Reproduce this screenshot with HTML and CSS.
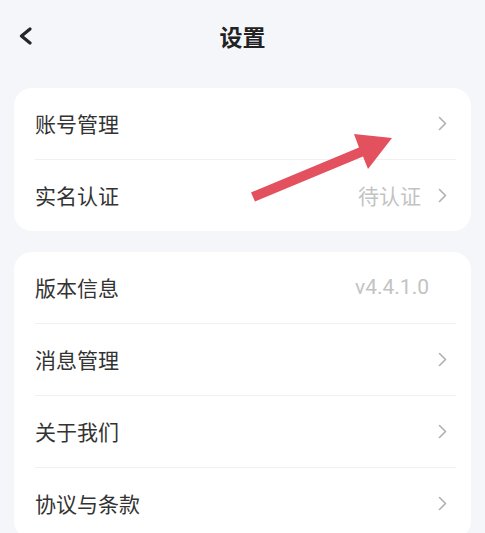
FILE: index.html
```html
<!DOCTYPE html>
<html lang="zh-CN">
<head>
<meta charset="utf-8">
<title>设置</title>
<link rel="stylesheet" href="styles.css">
</head>
<body>
<div class="page">
  <header class="header">
    <div class="back">
      <svg width="15" height="19" viewBox="0 0 15 19"><polyline points="12,2 3.5,9 12,16" fill="none" stroke="#262626" stroke-width="3.2" stroke-linecap="round" stroke-linejoin="round"/></svg>
    </div>
    <h1 class="title">设置</h1>
    <div></div>
  </header>

  <section class="card">
    <div class="row"><span class="label">账号管理</span><span class="spacer"></span><svg class="chev" width="9" height="15" viewBox="0 0 9 15"><polyline points="1.5,1.5 7.5,7.5 1.5,13.5" fill="none" stroke="#b0b0b0" stroke-width="1.6" stroke-linecap="round" stroke-linejoin="round"/></svg></div>
    <div class="row"><span class="label">实名认证</span><span class="spacer"></span><span class="value">待认证</span><svg class="chev" width="9" height="15" viewBox="0 0 9 15"><polyline points="1.5,1.5 7.5,7.5 1.5,13.5" fill="none" stroke="#b0b0b0" stroke-width="1.6" stroke-linecap="round" stroke-linejoin="round"/></svg></div>
  </section>

  <section class="card card-second">
    <div class="row"><span class="label">版本信息</span><span class="spacer"></span><span class="value version">v4.4.1.0</span></div>
    <div class="row"><span class="label">消息管理</span><span class="spacer"></span><svg class="chev" width="9" height="15" viewBox="0 0 9 15"><polyline points="1.5,1.5 7.5,7.5 1.5,13.5" fill="none" stroke="#b0b0b0" stroke-width="1.6" stroke-linecap="round" stroke-linejoin="round"/></svg></div>
    <div class="row"><span class="label">关于我们</span><span class="spacer"></span><svg class="chev" width="9" height="15" viewBox="0 0 9 15"><polyline points="1.5,1.5 7.5,7.5 1.5,13.5" fill="none" stroke="#b0b0b0" stroke-width="1.6" stroke-linecap="round" stroke-linejoin="round"/></svg></div>
    <div class="row"><span class="label">协议与条款</span><span class="spacer"></span><svg class="chev" width="9" height="15" viewBox="0 0 9 15"><polyline points="1.5,1.5 7.5,7.5 1.5,13.5" fill="none" stroke="#b0b0b0" stroke-width="1.6" stroke-linecap="round" stroke-linejoin="round"/></svg></div>
  </section>

  <svg class="annotation" width="485" height="533" viewBox="0 0 485 533">
    <polygon points="251.05,192.4 359,147.4 354,134 392,138 368,169 363,156.6 254.95,201.6" fill="#e3505e"/>
  </svg>
</div>
</body>
</html>
```

FILE: styles.css
```css
html, body {
  margin: 0;
  padding: 0;
  background: #f4f6fa;
}

body {
  font-family: "Noto Sans CJK SC", "Noto Sans", Roboto, sans-serif;
  color: #333333;
  width: 485px;
  height: 533px;
  overflow: hidden;
}

.page {
  position: relative;
  width: 485px;
  height: 533px;
}

.header {
  height: 72px;
  display: grid;
  grid-template-columns: 1fr auto 1fr;
  align-items: center;
  margin-bottom: 16px;
}

.back {
  padding-left: 18px;
  display: flex;
  align-items: center;
}

.back svg {
  display: block;
}

.title {
  margin: 0;
  font-size: 23px;
  font-weight: 700;
  color: #222222;
  line-height: 1;
}

.card {
  margin: 0 14px;
  background: #ffffff;
  border-radius: 18px;
}

.card-second {
  margin-top: 21px;
}

.row {
  height: 71px;
  margin: 0 15px 0 21px;
  padding-right: 9px;
  display: flex;
  align-items: center;
  border-bottom: 1px solid #f1f1f3;
}

.row:last-child {
  border-bottom: none;
}

.label {
  font-size: 21px;
  color: #333333;
  line-height: 1;
}

.spacer {
  flex: 1;
}

.value {
  font-size: 21px;
  color: #c3c3c3;
  line-height: 1;
  margin-right: 17px;
}

.version {
  font-family: Roboto, "Noto Sans", sans-serif;
  margin-right: 18px;
}

.chev {
  display: block;
}

.annotation {
  position: absolute;
  left: 0;
  top: 0;
  pointer-events: none;
}
```
